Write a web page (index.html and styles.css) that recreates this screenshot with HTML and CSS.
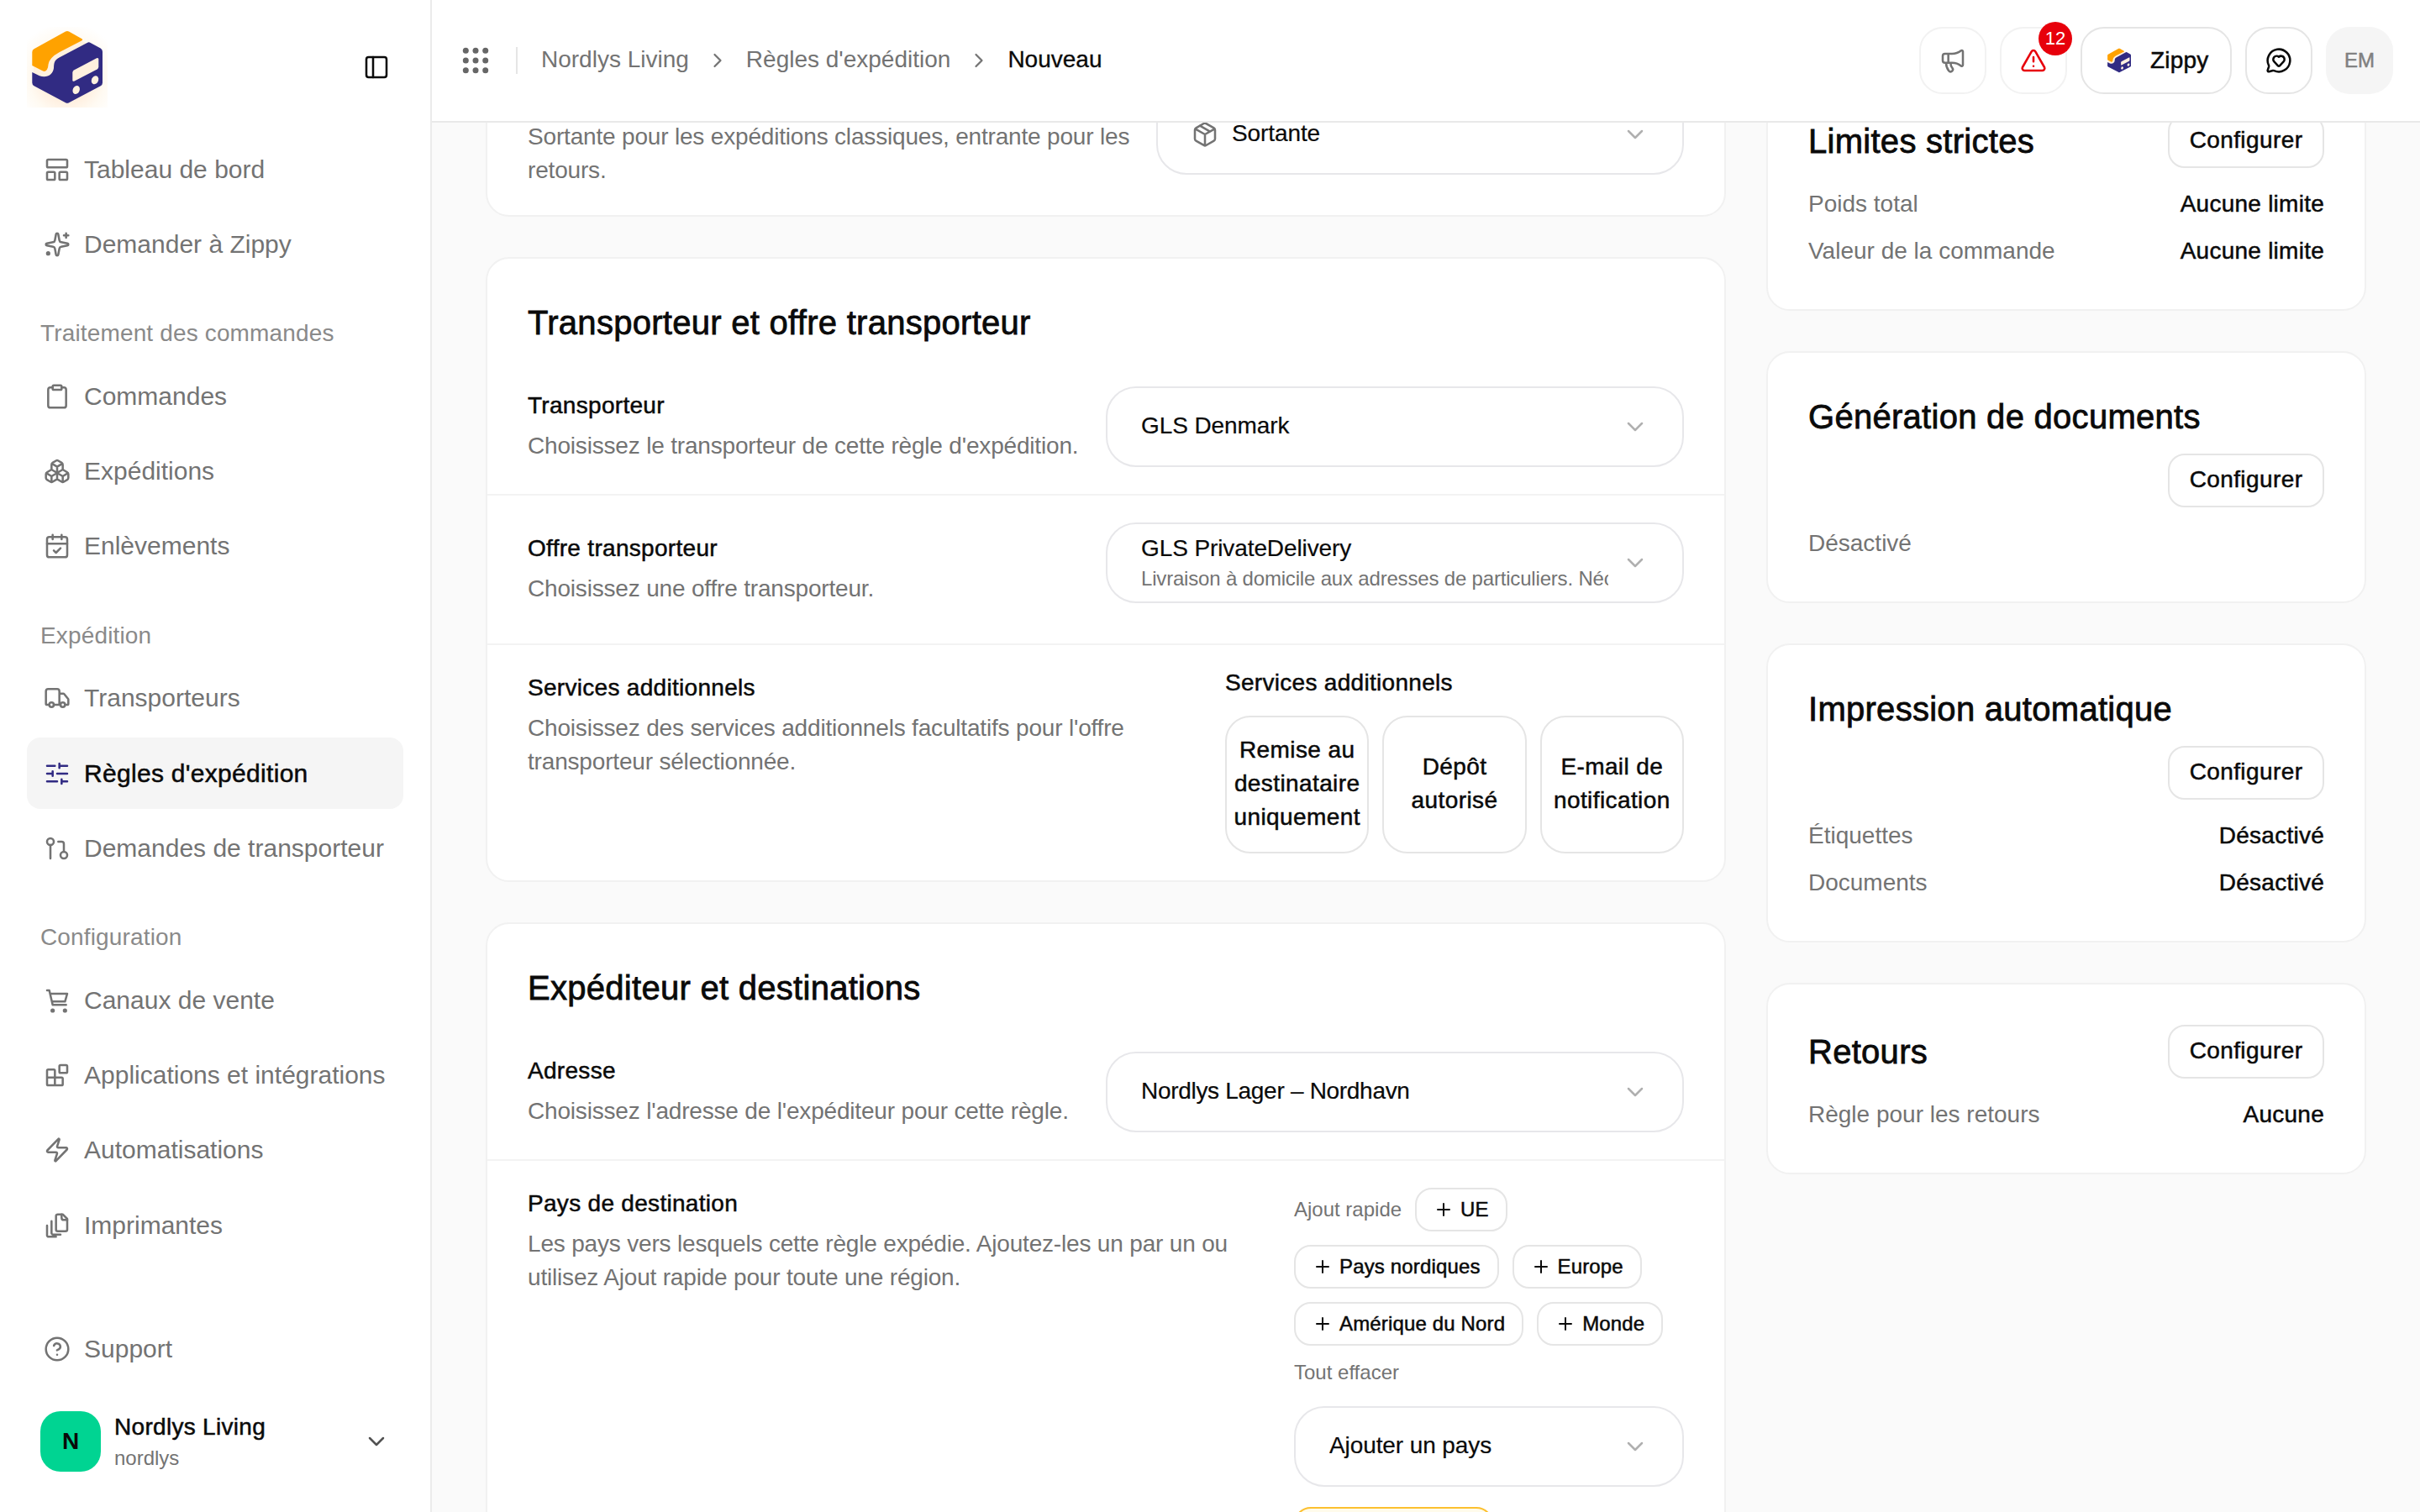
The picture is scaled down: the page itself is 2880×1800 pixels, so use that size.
FILE: index.html
```
<!DOCTYPE html>
<html lang="fr">
<head>
    <meta charset="UTF-8">
    <meta name="viewport" content="width=device-width, initial-scale=1.0">
    <title>Nouveau - Règles d'expédition</title>
    <link rel="stylesheet" href="styles.css">
</head>
<body>
    <svg class="sprite" aria-hidden="true">
        <symbol id="logo" viewBox="0 0 96 96">
            <path fill="#fff1df" d="M48 7 88 29v38L48 89 8 67V29z"/>
            <path fill="#ffa200" d="M46 5.600q2-1.200 4 0l15.500 8.700q1.600 1 0 2L38.500 30.300q-12 6.500-13 14.500-.200 4-1.500 6-1.700 3.200-5.500 1.500L6.300 46V30q0-2.500 2.200-3.700z"/>
            <path fill="#312b83" d="M71.700 18.900q2-1.100 4 0l12 6.600q2.300 1.300 2.300 4V66.500q0 2.500-2.200 3.700L50 90.200q-2 1.100-4 0L8.500 70.200q-2.200-1.200-2.200-3.700V54l8.700 4.300c8.500 3 16-1 17-9.300.300-6 .500-9 6.500-12.400z"/>
            <path fill="#fff1df" d="M54.300 54.500q0-2 1.700-3l27-14.300q2.300-1 2.300 1.200V47.500q0 2-1.700 3L56.600 64.500q-2.300 1-2.300-1.200z"/>
            <ellipse cx="58.700" cy="75" rx="4" ry="5.200" transform="rotate(25 58.700 75)" fill="#fff1df"/>
            <ellipse cx="81" cy="63.300" rx="4" ry="5.200" transform="rotate(25 81 63.300)" fill="#fff1df"/>
        </symbol>
        <symbol id="chevron-down" viewBox="0 0 24 24"><path d="m6 9 6 6 6-6"/></symbol>
        <symbol id="chevron-right" viewBox="0 0 24 24"><path d="m9 18 6-6-6-6"/></symbol>
        <symbol id="plus" viewBox="0 0 24 24"><path d="M5 12h14M12 5v14"/></symbol>
    </svg>

    <div class="app">
        <aside class="sidebar">
            <div class="sidebar-top">
                <div class="brand"><svg><use href="#logo"/></svg></div>
                <svg class="icon" viewBox="0 0 24 24"><rect width="18" height="18" x="3" y="3" rx="2"/><path d="M9 3v18"/></svg>
            </div>

            <nav class="menu">
                <a class="menu-item"><svg class="icon" viewBox="0 0 24 24"><rect width="18" height="7" x="3" y="3" rx="1"/><rect width="7" height="7" x="3" y="14" rx="1"/><rect width="7" height="7" x="14" y="14" rx="1"/></svg>Tableau de bord</a>
                <a class="menu-item"><svg class="icon" viewBox="0 0 24 24"><path d="M11.017 2.814a1 1 0 0 1 1.966 0l1.051 5.558a2 2 0 0 0 1.594 1.594l5.558 1.051a1 1 0 0 1 0 1.966l-5.558 1.051a2 2 0 0 0-1.594 1.594l-1.051 5.558a1 1 0 0 1-1.966 0l-1.051-5.558a2 2 0 0 0-1.594-1.594l-5.558-1.051a1 1 0 0 1 0-1.966l5.558-1.051a2 2 0 0 0 1.594-1.594zM20 2v4M22 4h-4"/><circle cx="4" cy="20" r="1"/></svg>Demander à Zippy</a>

                <h3 class="menu-label">Traitement des commandes</h3>
                <a class="menu-item"><svg class="icon" viewBox="0 0 24 24"><rect width="8" height="4" x="8" y="2" rx="1"/><path d="M16 4h2a2 2 0 0 1 2 2v14a2 2 0 0 1-2 2H6a2 2 0 0 1-2-2V6a2 2 0 0 1 2-2h2"/></svg>Commandes</a>
                <a class="menu-item"><svg class="icon" viewBox="0 0 24 24"><path d="M2.970 12.920A2 2 0 0 0 2 14.630v3.240a2 2 0 0 0 .970 1.710l3 1.800a2 2 0 0 0 2.060 0L12 19v-5.500l-5-3zM7 16.500l-4.740-2.850M7 16.500l5-3M7 16.500v5.170M12 13.500V19l3.970 2.380a2 2 0 0 0 2.060 0l3-1.800a2 2 0 0 0 .970-1.710v-3.240a2 2 0 0 0-.970-1.710L17 10.500zM17 16.500l-5-3M17 16.500l4.740-2.850M17 16.500v5.170M7.970 4.420A2 2 0 0 0 7 6.130v4.370l5 3 5-3V6.130a2 2 0 0 0-.970-1.710l-3-1.800a2 2 0 0 0-2.060 0zM12 8 7.260 5.150M12 8l4.740-2.850M12 13.500V8"/></svg>Expéditions</a>
                <a class="menu-item"><svg class="icon" viewBox="0 0 24 24"><path d="M8 2v4M16 2v4M3 10h18M9 16l2 2 4-4"/><rect width="18" height="18" x="3" y="4" rx="2"/></svg>Enlèvements</a>

                <h3 class="menu-label">Expédition</h3>
                <a class="menu-item"><svg class="icon" viewBox="0 0 24 24"><path d="M14 18V6a2 2 0 0 0-2-2H4a2 2 0 0 0-2 2v11a1 1 0 0 0 1 1h2M15 18H9M19 18h2a1 1 0 0 0 1-1v-3.650a1 1 0 0 0-.220-.624l-3.480-4.350A1 1 0 0 0 17.520 8H14"/><circle cx="17" cy="18" r="2"/><circle cx="7" cy="18" r="2"/></svg>Transporteurs</a>
                <a class="menu-item active"><svg class="icon" viewBox="0 0 24 24"><path d="M10 5H3M12 19H3M14 3v4M16 17v4M21 12h-9M21 19h-5M21 5h-7M8 10v4M8 12H3"/></svg>Règles d'expédition</a>
                <a class="menu-item"><svg class="icon" viewBox="0 0 24 24"><circle cx="18" cy="18" r="3"/><circle cx="6" cy="6" r="3"/><path d="M13 6h3a2 2 0 0 1 2 2v7M6 9v12"/></svg>Demandes de transporteur</a>

                <h3 class="menu-label">Configuration</h3>
                <a class="menu-item"><svg class="icon" viewBox="0 0 24 24"><circle cx="8" cy="21" r="1"/><circle cx="19" cy="21" r="1"/><path d="M3 3h2l3 13h12M6 6h15l-2 7H7.500"/></svg>Canaux de vente</a>
                <a class="menu-item"><svg class="icon" viewBox="0 0 24 24"><rect width="7" height="7" x="14" y="3" rx="1"/><path d="M10 21V8a1 1 0 0 0-1-1H4a1 1 0 0 0-1 1v12a1 1 0 0 0 1 1h12a1 1 0 0 0 1-1v-5a1 1 0 0 0-1-1H3"/></svg>Applications et intégrations</a>
                <a class="menu-item"><svg class="icon" viewBox="0 0 24 24"><path d="M4 14a1 1 0 0 1-.780-1.630l9.900-10.200a.5.5 0 0 1 .860.460l-1.920 6.020A1 1 0 0 0 13 10h7a1 1 0 0 1 .780 1.630l-9.900 10.200a.5.5 0 0 1-.860-.460l1.920-6.020A1 1 0 0 0 11 14z"/></svg>Automatisations</a>
                <a class="menu-item"><svg class="icon" viewBox="0 0 24 24"><path d="M21 7h-3a2 2 0 0 1-2-2V2"/><path d="M21 6v9.500c0 .8-.7 1.500-1.500 1.500h-7c-.8 0-1.500-.7-1.500-1.500v-12c0-.8.7-1.500 1.500-1.500H17Z"/><path d="M7 8v10.800c0 .3.2.6.4.8.2.2.5.4.8.4H15"/><path d="M3 12v8.800c0 .3.2.6.4.8.2.2.5.4.8.4H11"/></svg>Imprimantes</a>
            </nav>

            <div class="sidebar-bottom">
                <a class="menu-item"><svg class="icon" viewBox="0 0 24 24"><circle cx="12" cy="12" r="10"/><path d="M9.090 9a3 3 0 0 1 5.830 1c0 2-3 3-3 3M12 17h.01"/></svg>Support</a>
                <div class="account">
                    <div class="account-logo">N</div>
                    <div class="account-text">
                        <p class="account-name">Nordlys Living</p>
                        <p class="account-slug">nordlys</p>
                    </div>
                    <svg class="icon"><use href="#chevron-down"/></svg>
                </div>
            </div>
        </aside>

        <div class="page">
            <header class="header">
                <svg class="dots" viewBox="0 0 32 32"><circle cx="4.300" cy="4.300" r="3.500"/><circle cx="16" cy="4.300" r="3.500"/><circle cx="27.700" cy="4.300" r="3.500"/><circle cx="4.300" cy="16" r="3.500"/><circle cx="16" cy="16" r="3.500"/><circle cx="27.700" cy="16" r="3.500"/><circle cx="4.300" cy="27.700" r="3.500"/><circle cx="16" cy="27.700" r="3.500"/><circle cx="27.700" cy="27.700" r="3.500"/></svg>
                <span class="separator"></span>
                <nav class="breadcrumb">
                    <span>Nordlys Living</span>
                    <svg class="icon"><use href="#chevron-right"/></svg>
                    <span>Règles d'expédition</span>
                    <svg class="icon"><use href="#chevron-right"/></svg>
                    <span class="current">Nouveau</span>
                </nav>
                <div class="header-actions">
                    <button class="square-btn light"><svg class="icon" viewBox="0 0 24 24"><path d="M11 6a13 13 0 0 0 8.400-2.800A1 1 0 0 1 21 4v12a1 1 0 0 1-1.600.800A13 13 0 0 0 11 14H5a2 2 0 0 1-2-2V8a2 2 0 0 1 2-2zM6 14a12 12 0 0 0 2.400 7.200 2 2 0 0 0 3.200-2.400A8 8 0 0 1 10 14M8 6v8"/></svg></button>
                    <button class="square-btn light alert"><svg class="icon" viewBox="0 0 24 24"><path d="m21.730 18-8-14a2 2 0 0 0-3.480 0l-8 14A2 2 0 0 0 4 21h16a2 2 0 0 0 1.730-3M12 9v4M12 17h.01"/></svg><span class="badge">12</span></button>
                    <button class="zippy-btn"><svg><use href="#logo"/></svg>Zippy</button>
                    <button class="square-btn"><svg class="icon" viewBox="0 0 24 24"><path d="M2.992 16.342a2 2 0 0 1 .094 1.167l-1.065 3.290a1 1 0 0 0 1.236 1.168l3.413-.998a2 2 0 0 1 1.099.092 10 10 0 1 0-4.777-4.719"/><path d="M7.828 13.070A3 3 0 0 1 12 8.764a3 3 0 0 1 5.004 2.224 3 3 0 0 1-.832 2.083l-3.447 3.620a1 1 0 0 1-1.450-.001z"/></svg></button>
                    <div class="avatar">EM</div>
                </div>
            </header>

            <main class="content">
                <div class="column">
                    <section class="card first">
                        <div class="row">
                            <div class="row-text">
                                <p class="description">Sortante pour les expéditions classiques, entrante pour les retours.</p>
                            </div>
                            <div class="select direction">
                                <svg class="icon" viewBox="0 0 24 24"><path d="M11 21.730a2 2 0 0 0 2 0l7-4A2 2 0 0 0 21 16V8a2 2 0 0 0-1-1.730l-7-4a2 2 0 0 0-2 0l-7 4A2 2 0 0 0 3 8v8a2 2 0 0 0 1 1.730zM12 22V12M3.290 7 12 12l8.710-5M7.500 4.270l9 5.150"/></svg>
                                <span class="select-value">Sortante</span>
                                <svg class="icon arrow"><use href="#chevron-down"/></svg>
                            </div>
                        </div>
                    </section>

                    <section class="card">
                        <h2>Transporteur et offre transporteur</h2>
                        <div class="row no-top">
                            <div class="row-text">
                                <p class="label">Transporteur</p>
                                <p class="description">Choisissez le transporteur de cette règle d'expédition.</p>
                            </div>
                            <div class="select">
                                <span class="select-value">GLS Denmark</span>
                                <svg class="icon arrow"><use href="#chevron-down"/></svg>
                            </div>
                        </div>
                        <div class="row">
                            <div class="row-text">
                                <p class="label">Offre transporteur</p>
                                <p class="description">Choisissez une offre transporteur.</p>
                            </div>
                            <div class="select offer">
                                <div class="select-value">
                                    <p>GLS PrivateDelivery</p>
                                    <p class="select-note">Livraison à domicile aux adresses de particuliers. Nécessite</p>
                                </div>
                                <svg class="icon arrow"><use href="#chevron-down"/></svg>
                            </div>
                        </div>
                        <div class="row top">
                            <div class="row-text">
                                <p class="label">Services additionnels</p>
                                <p class="description">Choisissez des services additionnels facultatifs pour l'offre transporteur sélectionnée.</p>
                            </div>
                            <div class="services">
                                <p class="services-label">Services additionnels</p>
                                <div class="tiles">
                                    <button class="tile">Remise au destinataire uniquement</button>
                                    <button class="tile">Dépôt autorisé</button>
                                    <button class="tile">E-mail de notification</button>
                                </div>
                            </div>
                        </div>
                    </section>

                    <section class="card">
                        <h2>Expéditeur et destinations</h2>
                        <div class="row no-top">
                            <div class="row-text">
                                <p class="label">Adresse</p>
                                <p class="description">Choisissez l'adresse de l'expéditeur pour cette règle.</p>
                            </div>
                            <div class="select">
                                <span class="select-value address">Nordlys Lager – Nordhavn</span>
                                <svg class="icon arrow"><use href="#chevron-down"/></svg>
                            </div>
                        </div>
                        <div class="row top">
                            <div class="row-text">
                                <p class="label">Pays de destination</p>
                                <p class="description">Les pays vers lesquels cette règle expédie. Ajoutez-les un par un ou utilisez Ajout rapide pour toute une région.</p>
                            </div>
                            <div class="countries">
                                <div class="chips">
                                    <span class="small-text">Ajout rapide</span>
                                    <button class="chip"><svg class="icon"><use href="#plus"/></svg>UE</button>
                                    <button class="chip"><svg class="icon"><use href="#plus"/></svg>Pays nordiques</button>
                                    <button class="chip"><svg class="icon"><use href="#plus"/></svg>Europe</button>
                                    <button class="chip"><svg class="icon"><use href="#plus"/></svg>Amérique du Nord</button>
                                    <button class="chip"><svg class="icon"><use href="#plus"/></svg>Monde</button>
                                    <span class="small-text">Tout effacer</span>
                                </div>
                                <div class="select country">
                                    <span class="select-value">Ajouter un pays</span>
                                    <svg class="icon arrow"><use href="#chevron-down"/></svg>
                                </div>
                                <div class="notice"></div>
                            </div>
                        </div>
                    </section>
                </div>

                <div class="column side">
                    <section class="card side-card first">
                        <div class="side-head"><h2>Limites strictes</h2><button class="config-btn">Configurer</button></div>
                        <p class="line">Poids total<span>Aucune limite</span></p>
                        <p class="line">Valeur de la commande<span>Aucune limite</span></p>
                    </section>
                    <section class="card side-card">
                        <div class="side-head stacked"><h2>Génération de documents</h2><button class="config-btn">Configurer</button></div>
                        <p class="line">Désactivé</p>
                    </section>
                    <section class="card side-card">
                        <div class="side-head stacked"><h2>Impression automatique</h2><button class="config-btn">Configurer</button></div>
                        <p class="line">Étiquettes<span>Désactivé</span></p>
                        <p class="line">Documents<span>Désactivé</span></p>
                    </section>
                    <section class="card side-card">
                        <div class="side-head"><h2>Retours</h2><button class="config-btn">Configurer</button></div>
                        <p class="line">Règle pour les retours<span>Aucune</span></p>
                    </section>
                </div>
            </main>
        </div>
    </div>
</body>
</html>
```
FILE: styles.css
```
*{
    margin:0;
    padding:0;
    box-sizing:border-box;
}
body{
    font-family:'Liberation Sans',Arial,sans-serif;
    font-size:28px;
    line-height:40px;
    color:#0a0a0a;
    background:#fafafa;
}
button{
    font:inherit;
    color:inherit;
    background:#fff;
    border:2px solid #e5e5e5;
}
.sprite{
    display:none;
}
.icon{
    width:32px;
    height:32px;
    flex:none;
    fill:none;
    stroke:currentColor;
    stroke-width:1.9;
    stroke-linecap:round;
    stroke-linejoin:round;
}
.app{
    display:flex;
    height:1800px;
    overflow:hidden;
}

/* sidebar */
.sidebar{
    width:514px;
    flex:none;
    padding:32px 32px 48px;
    display:flex;
    flex-direction:column;
    background:#fff;
    border-right:2px solid #ebebeb;
}
.sidebar-top{
    display:flex;
    align-items:center;
    justify-content:space-between;
    padding-right:16px;
    margin-bottom:31px;
}
.brand{
    width:96px;
    height:96px;
    background:radial-gradient(circle at 50% 62%,#ffeedd 35%,#fffaf2 60%,#fff 85%);
}
.brand svg{
    display:block;
    width:96px;
    height:96px;
}
.menu{
    display:flex;
    flex-direction:column;
    gap:4px;
}
.menu-item{
    display:flex;
    align-items:center;
    gap:16px;
    height:85.3px;
    padding:0 20px;
    border-radius:16px;
    font-size:30px;
    color:#737373;
    white-space:nowrap;
}
.menu-item.active{
    background:#f5f5f5;
    color:#0a0a0a;
    letter-spacing:.3px;
    -webkit-text-stroke:.5px;
}
.menu-item.active .icon{
    color:#312b83;
}
.menu-label{
    height:64px;
    margin-top:23.6px;
    padding-left:16px;
    line-height:71px;
    font-size:28px;
    font-weight:400;
    letter-spacing:.15px;
    color:#8a8a8a;
}
.sidebar-bottom{
    margin-top:auto;
}
.account{
    display:flex;
    align-items:center;
    padding:0 16px;
    margin-top:31px;
}
.account-logo{
    width:72px;
    height:72px;
    border-radius:24px;
    background:#00d492;
    font-weight:700;
    line-height:72px;
    text-align:center;
}
.account-text{
    flex:1;
    margin-left:16px;
}
.account-name{
    letter-spacing:.3px;
    line-height:38px;
    padding-bottom:2px;
    -webkit-text-stroke:.5px;
}
.account-slug{
    font-size:24px;
    line-height:32px;
    color:#737373;
}
.account .icon{
    color:#525252;
}

/* header */
.page{
    flex:1;
    min-width:0;
    display:flex;
    flex-direction:column;
}
.header{
    height:146px;
    flex:none;
    display:flex;
    align-items:center;
    padding:0 32px 0 36px;
    background:#fff;
    border-bottom:2px solid #e9e9e9;
}
.dots{
    width:32px;
    height:32px;
    fill:#666;
}
.separator{
    width:2px;
    height:32px;
    margin:0 28px 0 32px;
    background:#e5e5e5;
}
.breadcrumb{
    display:flex;
    align-items:center;
    gap:20px;
    color:#737373;
}
.breadcrumb span{
    padding-bottom:2px;
}
.breadcrumb .icon{
    width:28px;
    height:28px;
}
.breadcrumb .current{
    color:#0a0a0a;
    -webkit-text-stroke:.3px;
}
.header-actions{
    display:flex;
    gap:16px;
    margin-left:auto;
}
.square-btn,.avatar{
    width:80px;
    height:80px;
    border-radius:28px;
    display:flex;
    align-items:center;
    justify-content:center;
    position:relative;
}
.square-btn.light{
    border-color:#f2f2f2;
    color:#737373;
}
.square-btn.alert{
    color:#e7000b;
}
.badge{
    position:absolute;
    top:-8px;
    right:-8px;
    width:40px;
    height:40px;
    border-radius:50%;
    background:#e7000b;
    color:#fff;
    font-size:22px;
    text-align:center;
}
.zippy-btn{
    display:flex;
    align-items:center;
    gap:21px;
    width:180px;
    padding-left:28px;
    padding-bottom:1px;
    border-radius:28px;
    letter-spacing:.2px;
    -webkit-text-stroke:.5px;
}
.zippy-btn svg{
    width:32px;
    height:32px;
}
.avatar{
    background:#f5f5f5;
    color:#808080;
    font-size:24px;
    -webkit-text-stroke:.5px;
}

/* content */
.content{
    flex:1;
    min-height:0;
    overflow:hidden;
    display:grid;
    grid-template-columns:1476px 714px;
    gap:48px;
    align-items:start;
    padding:0 64px;
}
.column{
    display:flex;
    flex-direction:column;
    gap:48px;
}
.card{
    background:#fff;
    border:2px solid #f1f1f1;
    border-radius:28px;
}
.card h2{
    font-size:40px;
    line-height:56px;
    font-weight:400;
    letter-spacing:.28px;
    -webkit-text-stroke:.8px;
}
.column > .card > h2{
    padding:48px 48px 0;
    margin-bottom:48px;
}
.card.first{
    margin-top:-84px;
}
.card.first .description{
    padding-top:48px;
}
.row{
    display:flex;
    align-items:center;
    gap:20px;
    padding:32px 48px;
}
.row + .row{
    border-top:2px solid #f3f3f3;
}
.row.no-top{
    padding-top:0;
}
.row.top{
    align-items:flex-start;
}
.row-text{
    flex:1;
    min-width:0;
    margin-top:-1px;
    padding-bottom:1px;
}
.label{
    margin-bottom:8px;
    letter-spacing:.3px;
    -webkit-text-stroke:.5px;
}
.description{
    color:#737373;
    letter-spacing:-.18px;
}
.select{
    width:688px;
    height:96px;
    flex:none;
    display:flex;
    align-items:center;
    gap:16px;
    padding:0 40px;
    border:2px solid #e7e7ea;
    border-radius:36px;
    color:#0a0a0a;
}
.select.direction{
    width:628px;
}
.select.direction .icon{
    color:#737373;
}
.select.offer{
    margin-bottom:16px;
}
.select .icon.arrow{
    color:#b0b0b0;
}
.select-value{
    flex:1;
    min-width:0;
    overflow:hidden;
    padding-bottom:2px;
    white-space:nowrap;
    letter-spacing:-.1px;
    -webkit-text-stroke:.2px;
}
.select-value.address{
    letter-spacing:-.3px;
}
.select-note{
    font-size:24px;
    line-height:32px;
    color:#737373;
    letter-spacing:-.18px;
    -webkit-text-stroke:0;
}
.services{
    width:546px;
}
.services-label{
    line-height:28px;
    margin-top:-1px;
    margin-bottom:25px;
    letter-spacing:.3px;
    -webkit-text-stroke:.5px;
}
.tiles{
    display:grid;
    grid-template-columns:repeat(3,1fr);
    gap:16px;
}
.tile{
    height:164px;
    min-width:0;
    padding-bottom:2px;
    border-radius:30px;
    letter-spacing:.4px;
    -webkit-text-stroke:.5px;
}
.countries{
    width:464px;
}
.chips{
    display:flex;
    flex-wrap:wrap;
    gap:16px;
    align-items:center;
}
.small-text{
    font-size:24px;
    line-height:32px;
    color:#737373;
}
.chip{
    display:flex;
    align-items:center;
    gap:8px;
    height:52px;
    padding:0 20px;
    border-radius:20px;
    font-size:24px;
    letter-spacing:.15px;
    -webkit-text-stroke:.5px;
}
.chip .icon{
    width:24px;
    height:24px;
    stroke-width:2;
}
.select.country{
    width:464px;
    margin-top:24px;
}
.notice{
    width:237px;
    height:52px;
    margin-top:24px;
    border:2px solid #fcc02f;
    border-radius:20px;
    background:#fffbeb;
}

/* right column */
.side-card{
    padding:48px;
}
.side-card.first{
    margin-top:-60px;
}
.side-head{
    display:flex;
    align-items:center;
    justify-content:space-between;
    margin-bottom:23px;
}
.side-head.stacked{
    flex-direction:column;
    align-items:flex-start;
    gap:16px;
}
.stacked .config-btn{
    align-self:flex-end;
}
.config-btn{
    width:186px;
    height:64px;
    padding-bottom:2px;
    border-radius:20px;
    letter-spacing:.4px;
    -webkit-text-stroke:.5px;
}
.line{
    display:flex;
    justify-content:space-between;
    padding-bottom:1px;
    color:#737373;
}
.line + .line{
    margin-top:15px;
}
.line span{
    color:#0a0a0a;
    letter-spacing:.25px;
    -webkit-text-stroke:.5px;
}
```
